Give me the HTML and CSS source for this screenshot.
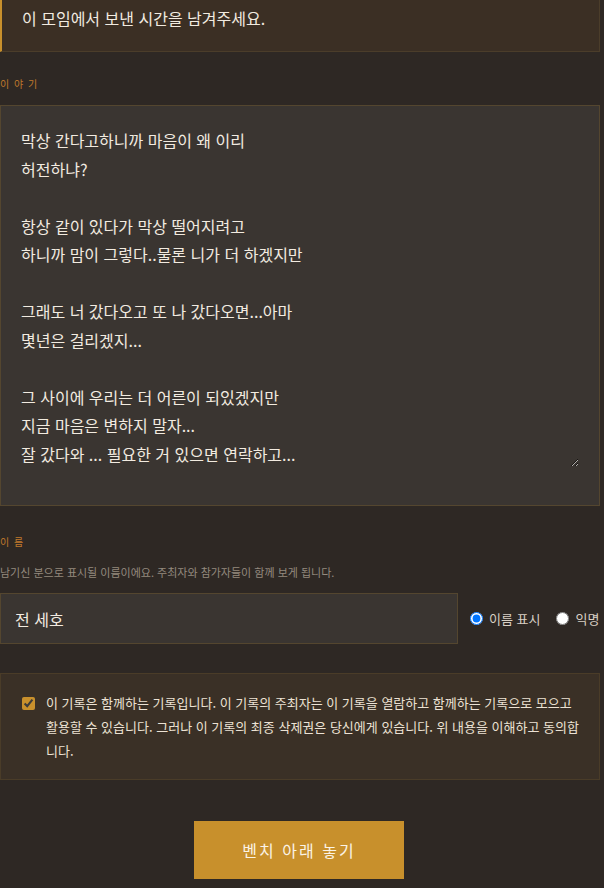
FILE: index.html
```html
<!DOCTYPE html>
<html lang="ko">
<head>
<meta charset="utf-8">
<link rel="stylesheet" href="styles.css">
</head>
<body>
<div class="page">
  <div class="intro">이 모임에서 보낸 시간을 남겨주세요.</div>

  <div class="label story-label">이 야 기</div>
  <div class="story-box">
  <textarea class="story">막상 간다고하니까 마음이 왜 이리
허전하냐?

항상 같이 있다가 막상 떨어지려고
하니까 맘이 그렇다..물론 니가 더 하겠지만

그래도 너 갔다오고 또 나 갔다오면...아마
몇년은 걸리겠지...

그 사이에 우리는 더 어른이 되있겠지만
지금 마음은 변하지 말자...
잘 갔다와 ... 필요한 거 있으면 연락하고...</textarea>
  </div>

  <div class="label name-label">이 름</div>
  <div class="help">남기신 분으로 표시될 이름이에요. 주최자와 참가자들이 함께 보게 됩니다.</div>
  <div class="name-row">
    <input class="name" type="text" value="전 세호">
    <label class="opt"><input type="radio" name="show" checked><span>이름 표시</span></label>
    <label class="opt"><input type="radio" name="show"><span>익명</span></label>
  </div>

  <div class="consent">
    <input type="checkbox" class="check" checked>
    <p class="consent-text">이 기록은 함께하는 기록입니다. 이 기록의 주최자는 이 기록을 열람하고 함께하는 기록으로 모으고 활용할 수 있습니다. 그러나 이 기록의 최종 삭제권은 당신에게 있습니다. 위 내용을 이해하고 동의합니다.</p>
  </div>

  <div class="actions">
    <button class="submit" type="button">벤치 아래 놓기</button>
  </div>
</div>
</body>
</html>
```

FILE: styles.css
```css
html, body {
  margin: 0;
  padding: 0;
  background: #2e2824;
  overflow: hidden;
}
body {
  font-family: "Noto Sans CJK KR", "Noto Sans", sans-serif;
  color: #efe6d8;
}
.page {
  width: 600px;
}
.intro {
  background: #3b2f24;
  border: 1px solid #4b3d2a;
  border-top: none;
  border-left: 2px solid #c8902c;
  padding: 6px 20px 21px;
  font-size: 16px;
  line-height: 24px;
  color: #f2ebe0;
}
.label {
  font-size: 10px;
  line-height: 14px;
  letter-spacing: 1px;
  color: #c07a2c;
}
.story-label {
  margin-top: 25px;
  margin-bottom: 14px;
}
.story-box {
  box-sizing: border-box;
  width: 600px;
  height: 401px;
  padding: 20px 20px 37px;
  background: #3a3531;
  border: 1px solid #54462f;
}
.story {
  display: block;
  box-sizing: border-box;
  width: 100%;
  height: 341px;
  margin: 0;
  padding: 0;
  background: transparent;
  border: none;
  border-radius: 0;
  color: #f2ebe0;
  font-family: inherit;
  font-size: 16px;
  line-height: 28.5px;
  outline: none;
}
.name-label {
  margin-top: 29px;
}
.help {
  margin-top: 15px;
  font-size: 11px;
  line-height: 16px;
  color: #948a7f;
}
.name-row {
  margin-top: 13px;
  display: flex;
  align-items: center;
  white-space: nowrap;
}
.name {
  box-sizing: border-box;
  flex: none;
  width: 458px;
  height: 51px;
  margin: 0 7px 0 0;
  padding: 0 14px;
  background: #3a3531;
  border: 1px solid #54462f;
  border-radius: 0;
  color: #f2ebe0;
  font-family: inherit;
  font-size: 16px;
  outline: none;
}
.opt {
  display: flex;
  align-items: center;
  flex: none;
  font-size: 13px;
  color: #d9d0c4;
  margin-right: 11px;
}
.opt input {
  margin: 0 6px 0 5px;
  width: 13px;
  height: 13px;
}
.consent {
  margin-top: 29px;
  display: flex;
  align-items: flex-start;
  background: #3a3026;
  border: 1px solid #4a3c28;
  padding: 17px 20px 16px 20px;
}
.check {
  flex: none;
  width: 13px;
  height: 13px;
  margin: 6px 11px 0 1px;
  accent-color: #c8902c;
}
.consent-text {
  margin: 0;
  font-size: 13px;
  line-height: 24px;
  word-break: break-all;
  color: #ece2d4;
}
.actions {
  display: flex;
  justify-content: center;
  margin-top: 41px;
}
.submit {
  width: 210px;
  height: 58px;
  background: #c8902c;
  border: none;
  border-radius: 0;
  color: #fbf3e6;
  font-family: inherit;
  font-size: 16px;
  letter-spacing: 2px;
  margin-left: -2px;
}
```
